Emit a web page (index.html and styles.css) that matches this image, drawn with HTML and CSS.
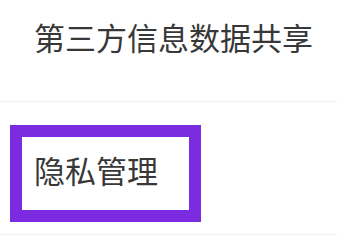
FILE: index.html
```html
<!DOCTYPE html>
<html lang="zh-CN">
<head>
<meta charset="utf-8">
<link rel="stylesheet" href="styles.css">
</head>
<body>
<div class="page">
  <div class="section-title">第三方信息数据共享</div>
  <div class="divider"></div>
  <div class="item-row">
    <div class="highlight">
      <span class="item-label">隐私管理</span>
    </div>
  </div>
  <div class="divider"></div>
</div>
</body>
</html>
```
FILE: styles.css
```css
html, body {
  margin: 0;
  padding: 0;
  background: #ffffff;
}
.page {
  width: 348px;
  height: 245px;
  overflow: hidden;
  font-family: "Noto Sans CJK SC", "Noto Sans", sans-serif;
  color: #383838;
}
.section-title {
  font-size: 31px;
  line-height: 31px;
  padding: 21px 0 0 34px;
  box-sizing: border-box;
  height: 101px;
}
.divider {
  height: 1px;
  margin-right: 11px;
  background: #f1f1f1;
}
.item-row {
  padding: 23px 0 12px 10px;
}
.highlight {
  width: 191px;
  height: 97px;
  box-sizing: border-box;
  border: 12px solid #7b2be0;
  display: flex;
  align-items: center;
  padding: 0 0 8px 12px;
}
.item-label {
  font-size: 31px;
  line-height: 31px;
}
```
